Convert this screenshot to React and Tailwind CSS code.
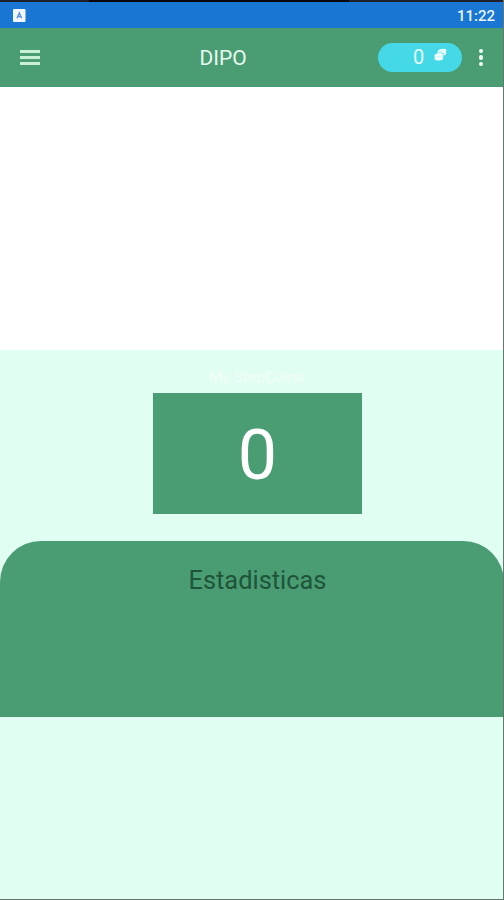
function StatusBar() {
  return (
    <div className="flex h-[26px] shrink-0 items-center justify-between bg-[#1976d2] pl-[13px] pr-[9px]">
      <svg width="13" height="13" viewBox="0 0 13 13" className="mt-px">
        <rect width="12.5" height="13" rx="1" fill="#f2f7ff" />
        <path d="M4 9.2 6.3 4l2.3 5.2M4.9 7.6h2.8" fill="none" stroke="#5a8fdc" strokeWidth="1.4" />
      </svg>
      <span className="mt-[2px] text-[15px] font-medium leading-none text-[#e8f3ff]">11:22</span>
    </div>
  );
}

function AppBar() {
  return (
    <header className="grid h-[58.5px] shrink-0 grid-cols-[199.5px_1fr_auto] items-center bg-[#4a9c73]">
      <button className="ml-5 flex w-5 flex-col gap-[3px]" aria-label="Menu">
        <span className="h-[3px] bg-[#c9efd7]" />
        <span className="h-[3px] bg-[#c9efd7]" />
        <span className="h-[3px] bg-[#c9efd7]" />
      </button>
      <h1 className="mt-[2px] text-[21px] leading-none text-[#e6fbef]">DIPO</h1>
      <div className="flex items-center">
        <div className="flex h-[29px] w-[84px] items-center rounded-full bg-[#45d8e6] pl-[35px]">
          <span className="text-[20px] leading-none text-[#e6ffff]">0</span>
          <svg width="13" height="13" viewBox="0 0 13 13" className="mb-[5px] ml-[10px]">
            <path d="M4 2.2Q7.5-.2 12.2 1.1V5.8Q11.5 7.2 9.8 7.5V5.2Q7 3.8 3.4 4.8Z" fill="#effdff" />
            <path d="M1.2 6.4Q5 4 9.4 6.1L8.9 11.6Q4.7 13.2 .7 11.8L.5 7.4Z" fill="#effdff" />
            <path d="M4.6 3.5Q8 2.4 11.6 3.1M1 8.7Q5 9.3 9 8" fill="none" stroke="#a5edf3" strokeWidth=".5" />
          </svg>
        </div>
        <button className="ml-[16.5px] mr-[21px] flex w-[4.5px] flex-col gap-[2px]" aria-label="Options">
          <span className="size-[4.5px] rounded-full bg-[#effff4]" />
          <span className="size-[4.5px] rounded-full bg-[#effff4]" />
          <span className="size-[4.5px] rounded-full bg-[#effff4]" />
        </button>
      </div>
    </header>
  );
}

export default function App() {
  return (
    <div className="relative flex h-[900px] w-[504px] flex-col overflow-hidden bg-[#e0fef1] font-['Roboto',sans-serif]">
      <div className="flex h-[2px] shrink-0 bg-[#20202c]">
        <div className="ml-[89px] w-[260px] bg-[#08080c]" />
      </div>
      <StatusBar />
      <AppBar />
      <div className="h-[263.5px] shrink-0 bg-white" />
      <main className="flex flex-1 flex-col items-center">
        <p className="ml-[9px] mt-5 h-[23px] text-[15.5px] leading-[15px] text-[#f1fffa]">My StepCoins</p>
        <div className="ml-[11px] flex h-[120.5px] w-[209px] items-center justify-center bg-[#4a9c73] pt-[4px] text-[70px] leading-none text-white">0</div>
        <section className="mt-[27.5px] h-[175.5px] w-full rounded-t-[41px] bg-[#4a9c73] pl-[11px] pt-[25px] text-center">
          <h2 className="text-[25.4px] leading-[28px] text-[#1e553a]">Estadisticas</h2>
        </section>
      </main>
      <div className="pointer-events-none absolute inset-0 border-b border-r border-[#63776f]" />
    </div>
  );
}
